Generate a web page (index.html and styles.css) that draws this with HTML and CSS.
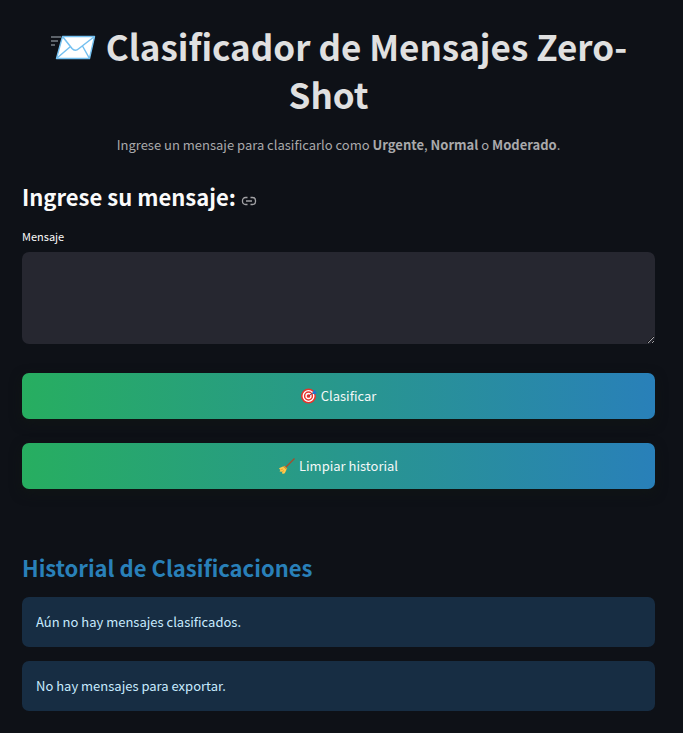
FILE: index.html
```
<!DOCTYPE html>
<html lang="es">
<head>
<meta charset="utf-8">
<meta name="viewport" content="width=device-width, initial-scale=1">
<title>Clasificador de Mensajes Zero-Shot</title>
<link rel="stylesheet" href="styles.css">
</head>
<body>
<main class="page">
  <header class="intro">
    <h1 class="title"><svg class="envelope" viewBox="0 0 46 28" aria-hidden="true">
      <path d="M1 4h10M1 8h7M1 12h4" stroke="#a9b4bb" stroke-width="1.2" fill="none"/>
      <path d="M12.500 3.500H44.500L39.500 25.500H6.500Z" fill="#fff" stroke="#74c0f0" stroke-width="1.400" stroke-linejoin="round"/>
      <path d="M12.500 3.500L22 15.500Q25 19 29 15.500L44.500 3.500M6.500 25.500L20.500 13.500M39.500 25.500L32.500 13" fill="none" stroke="#74c0f0" stroke-width="1.500"/>
    </svg> <span class="title-text">Clasificador de Mensajes Zero-Shot</span></h1>
    <p class="subtitle">Ingrese un mensaje para clasificarlo como <strong>Urgente</strong>, <strong>Normal</strong> o <strong>Moderado</strong>.</p>
  </header>

  <form class="message-form">
    <h2 class="section-title" id="ingrese">Ingrese su mensaje:
      <a class="anchor" href="#ingrese" aria-label="Enlace a la sección"><svg viewBox="0 0 16 10" aria-hidden="true"><path d="M6.500 1.500H4.500A3 3 0 0 0 1.500 4.500V5.500A3 3 0 0 0 4.500 8.500H6.500M9.500 1.500H11.500A3 3 0 0 1 14.500 4.500V5.500A3 3 0 0 1 11.500 8.500H9.500M5 5H11" fill="none" stroke="#a3a3a6" stroke-width="1.300"/></svg></a>
    </h2>
    <label class="label" for="mensaje">Mensaje</label>
    <textarea class="message" id="mensaje"></textarea>
    <button class="button" type="button"><svg class="icon" viewBox="0 0 16 16" aria-hidden="true">
      <circle cx="7.500" cy="8" r="7.500" fill="#e8332c"/>
      <circle cx="7.500" cy="8" r="5.300" fill="none" stroke="#fff" stroke-width="1.300"/>
      <circle cx="7.500" cy="8" r="2.500" fill="none" stroke="#fff" stroke-width="1.300"/>
      <path d="M7.500 8L12.500 4.500" stroke="#7b3a45" stroke-width="1"/>
      <path d="M11.500 5L12.500 2.800L14.500 2L14.300 3.800L16 4.300L14.200 6.200L12 6Z" fill="#1976d2"/>
    </svg>Clasificar</button>
    <button class="button" type="button"><svg class="icon" viewBox="0 0 16 16" aria-hidden="true">
      <path d="M6 10L15.500 .5" stroke="#a84b2b" stroke-width="1.300" fill="none"/>
      <path d="M4 8.500L0 10.200L1.200 12L.6 13.500L3 13.800L3.500 16L5.800 15.200L7.600 11.500Z" fill="#ffca4b"/>
      <path d="M4 8.500L5.400 7.800L8.300 10.400L7.600 11.500Z" fill="#e69a2e"/>
      <path d="M1.200 12L4 11M3 13.800L5 12.500" stroke="#e2952b" stroke-width=".7"/>
    </svg>Limpiar historial</button>
  </form>

  <section class="history">
    <h2 class="section-title history-title">Historial de Clasificaciones</h2>
    <p class="notice">Aún no hay mensajes clasificados.</p>
    <p class="notice">No hay mensajes para exportar.</p>
  </section>
</main>
</body>
</html>
```
FILE: styles.css
```
* {
  box-sizing: border-box;
}

body {
  margin: 0;
  background: #0e1117;
  color: #fafafa;
  font: 13px/22px "Source Sans Pro", "Noto Sans CJK SC", "Noto Sans", sans-serif;
}

.page {
  padding: 22px 28px 20px 22px;
}

h1, h2, p {
  margin: 0;
}

.intro {
  text-align: center;
}

.title {
  color: #e0e0e0;
  font-size: 35px;
  font-weight: 700;
  line-height: 48px;
}

.title-text {
  padding-right: 20px;
}

.envelope {
  width: 46px;
  height: 28px;
  margin-right: 2px;
}

.subtitle {
  margin-top: 16px;
  color: #a9a9ab;
}

.message-form {
  display: flex;
  flex-direction: column;
  margin-top: 24px;
}

.section-title {
  font-size: 22px;
  font-weight: 600;
  line-height: 32px;
}

.anchor {
  display: inline-flex;
  width: 16px;
  height: 10px;
}

.label {
  margin-top: 13px;
  font-size: 11px;
}

.message {
  display: block;
  height: 92px;
  margin: 5px 0 29px;
  padding: 12px;
  border: 0;
  border-radius: 7px;
  background: #262730;
  color: inherit;
  font: inherit;
  resize: vertical;
}

.button {
  display: flex;
  align-items: center;
  justify-content: center;
  gap: 4px;
  height: 46px;
  margin-bottom: 24px;
  padding: 0 0 1px;
  border: 0;
  border-radius: 7px;
  background: linear-gradient(90deg, #27ae60, #2980b9);
  box-shadow: 0 4px 12px rgba(16, 22, 20, .8);
  color: #f4f8f8;
  font: inherit;
}

.icon {
  width: 16px;
  height: 16px;
}

.history {
  display: flex;
  flex-direction: column;
  gap: 14px;
  margin-top: 38px;
}

.history-title {
  color: #2980b9;
}

.notice {
  padding: 14px;
  border-radius: 7px;
  background: #172d43;
  color: #c7ebff;
}
```
